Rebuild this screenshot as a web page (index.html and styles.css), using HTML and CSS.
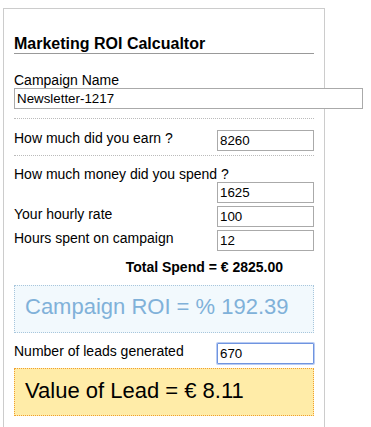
FILE: index.html
```html
<!DOCTYPE html>
<html lang="en">
<head>
    <meta charset="UTF-8">
    <title>Marketing ROI Calcualtor</title>
    <link rel="stylesheet" href="styles.css">
</head>
<body>
    <div class="calculator">
        <h2>Marketing ROI Calcualtor</h2>

        <div class="name-field">
            <label for="campaign">Campaign Name</label>
            <input type="text" id="campaign" class="name-input" value="Newsletter-1217">
        </div>

        <div class="separator"></div>

        <div class="row earn-row">
            <label for="earn">How much did you earn ?</label>
            <input type="text" id="earn" value="8260">
        </div>

        <div class="separator sep-tight"></div>

        <div class="spend-block">
            <label for="spend">How much money did you spend ?</label>
            <div class="row right-only">
                <input type="text" id="spend" value="1625">
            </div>
            <div class="row">
                <label for="rate">Your hourly rate</label>
                <input type="text" id="rate" value="100">
            </div>
            <div class="row">
                <label for="hours">Hours spent on campaign</label>
                <input type="text" id="hours" value="12">
            </div>
        </div>

        <div class="total" id="total">Total Spend = € 2825.00</div>

        <div class="roi-box" id="roi">Campaign ROI = % 192.39</div>

        <div class="row leads-row">
            <label for="leads">Number of leads generated</label>
            <input type="text" id="leads" class="focused" value="670">
        </div>

        <div class="lead-box" id="leadValue">Value of Lead = € 8.11</div>
    </div>

    <script>
        function num(id) {
            return parseFloat(document.getElementById(id).value) || 0;
        }

        function calculate() {
            const earn = num('earn');
            const total = num('spend') + num('rate') * num('hours');
            const leads = num('leads');

            document.getElementById('total').textContent = 'Total Spend = € ' + total.toFixed(2);

            const roi = total ? (earn - total) / total * 100 : 0;
            document.getElementById('roi').textContent = 'Campaign ROI = % ' + roi.toFixed(2);

            // value of a lead = profit per lead
            const value = leads ? (earn - total) / leads : 0;
            document.getElementById('leadValue').textContent = 'Value of Lead = € ' + value.toFixed(2);
        }

        document.querySelectorAll('.calculator input').forEach(el => {
            if (el.id !== 'campaign') el.addEventListener('input', calculate);
        });
        calculate();
    </script>
</body>
</html>
```

FILE: styles.css
```css
body {
    font-family: "Liberation Sans", Arial, sans-serif;
    margin: 8px 0 0 3px;
    background-color: #fff;
    color: #000;
}
.calculator {
    width: 300px;
    padding: 0 10px 20px;
    border: 1px solid #ccc;
}
h2 {
    font-size: 16px;
    line-height: 18px;
    margin: 26px 0 0;
    padding: 0;
    border-bottom: 1px solid #999;
}
label {
    font-size: 14px;
    line-height: 16px;
}
input {
    font-family: "Liberation Sans", Arial, sans-serif;
    font-size: 13.33px;
    box-sizing: border-box;
    width: 97px;
    height: 21px;
    padding: 1px 2px;
    margin: 0;
    border: 1px solid #aaa;
    color: #000;
    background: #fff;
}
.name-field {
    margin-top: 19px;
}
.name-field label {
    display: block;
    line-height: 15px;
}
.name-input {
    width: 349px;
}
.separator {
    border-top: 1px dotted #bbb;
    margin-top: 9px;
}
.sep-tight {
    margin-top: 4px;
}
.row {
    display: flex;
    justify-content: space-between;
    align-items: flex-start;
}
.earn-row {
    margin-top: 11px;
}
.spend-block {
    margin-top: 10px;
}
.spend-block > label {
    display: block;
}
.spend-block .row + .row {
    margin-top: 3px;
}
.right-only {
    justify-content: flex-end;
}
.total {
    font-size: 14px;
    font-weight: bold;
    line-height: 16px;
    text-align: right;
    padding-right: 31px;
    margin-top: 8px;
}

/* Result boxes */
.roi-box {
    margin-top: 10px;
    padding: 8px 10px 13px;
    font-size: 22px;
    line-height: 25px;
    color: #80b1d9;
    background-color: #f2f9fd;
    border: 1px dotted #a8c6dc;
}
.leads-row {
    margin-top: 10px;
}
.focused {
    border: 1px solid #6f94e0;
    box-shadow: 0 0 0 1px #b8cbf2;
    border-radius: 1px;
}
.lead-box {
    margin-top: 4px;
    padding: 9px 10px 12px;
    font-size: 22px;
    line-height: 25px;
    background-color: #ffeca8;
    border: 1px dotted #f0a030;
}
```
